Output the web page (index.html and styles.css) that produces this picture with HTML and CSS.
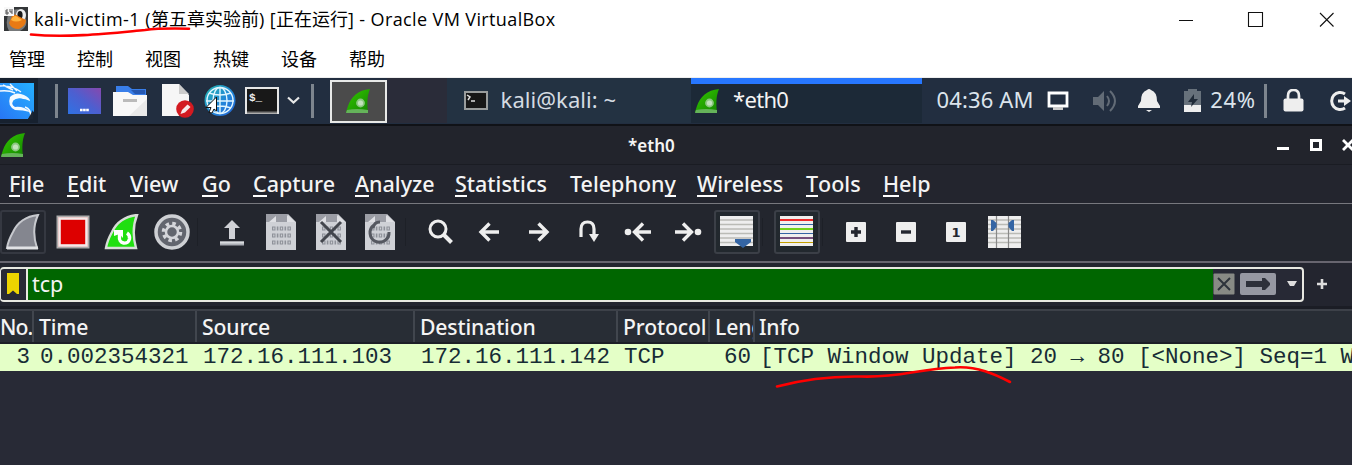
FILE: index.html
```html
<!DOCTYPE html>
<html lang="zh-CN">
<head>
<meta charset="utf-8">
<title>kali-victim-1</title>
<link rel="stylesheet" href="styles.css">
</head>
<body>
<svg class="defs" width="0" height="0">
  <defs>
    <linearGradient id="finfill" x1="0" y1="0" x2="1" y2="1"><stop offset="0" stop-color="#35c900"/><stop offset="1" stop-color="#128500"/></linearGradient>
    <linearGradient id="desk" x1="0" y1="1" x2="1" y2="0"><stop offset="0" stop-color="#2f72e4"/><stop offset=".5" stop-color="#4d5fd0"/><stop offset="1" stop-color="#8648ae"/></linearGradient>
    <linearGradient id="sky" x1="0" y1="1" x2="1" y2="0"><stop offset="0" stop-color="#2876f5"/><stop offset="1" stop-color="#25b1ff"/></linearGradient>
    <linearGradient id="world" x1="0" y1="0" x2="1" y2="1"><stop offset="0" stop-color="#23b5ad"/><stop offset=".6" stop-color="#2184db"/><stop offset="1" stop-color="#2461cf"/></linearGradient>
  </defs>
  <symbol id="fin" viewBox="0 0 24 24">
    <path d="M24 0C12 1 5 8 2 17L0 23H22C21 15 21 7 24 0Z" fill="url(#finfill)"/>
    <path d="M1 21Q11 19 22 21V24H0Z" fill="#65b35a"/>
    <circle cx="14.5" cy="14" r="4.4" fill="#8bc780"/><circle cx="14.5" cy="14" r="2.6" fill="#c2e2bc"/>
  </symbol>
  <symbol id="doc" viewBox="0 0 30 36">
    <path d="M0 0H22L30 8V36H0Z" fill="#cfd1d6"/><path d="M0 0H22V8H0Z" fill="#9b9da5"/>
    <path d="M3 8L10 2V8ZM21 1L29 8H21Z" fill="#dfe0e4"/>
    <g fill="none" stroke="#8e9199" stroke-width="4"><path d="M6 14.500H25M6 21.500H25M6 28.500H25" stroke-dasharray="3.500 1.300 1.600 1.300"/></g>
    <g fill="none" stroke="#cfd1d6" stroke-width="1.800"><path d="M7.200 14.500H24M7.200 21.500H24M7.200 28.500H24" stroke-dasharray="1.200 6.500"/></g>
  </symbol>
</svg>

<header class="host-title">
  <svg class="vm-icon" viewBox="0 0 24 24">
    <rect width="24" height="24" fill="#333638"/><path d="M6 4Q20-2 22 12Q24 20 16 24H5Q0 15 6 4Z" fill="#77797a"/>
    <ellipse cx="17" cy="8" rx="5" ry="6" fill="#eceded"/><ellipse cx="16" cy="8" rx="2.6" ry="4" fill="#17191a"/>
    <path d="M5 16L8 9Q11 6 14 9L22 13Q22 19 15 22Q7 22 5 16Z" fill="#e87a14"/><path d="M8 11Q11 7 15 11L18 13Q12 16 7 13Z" fill="#ffb33c"/>
    <rect width="10" height="9" fill="#f8f8f8"/><path d="M4 3H2V7H4V5H2M6 2V5H8M8 2V7" fill="none" stroke="#444" stroke-width=".9"/>
  </svg>
  <div class="host-name"><span class="t1">kali-victim-1 (</span><span class="t2">第五章实验前</span><span class="t3">) [</span><span class="t2">正在运行</span><span class="t4">] - Oracle VM VirtualBox</span></div>
  <svg class="host-controls" viewBox="0 0 166 38"><path d="M9 20.500H23M78.500 12.500H92.500V26.500H78.500ZM150 13L163.500 26.500M163.500 13L150 26.500" fill="none" stroke="#111" stroke-width="1.1"/></svg>
</header>
<nav class="host-menu"><span>管理</span><span>控制</span><span>视图</span><span>热键</span><span>设备</span><span>帮助</span></nav>

<section class="panel">
  <div class="kali-logo"><svg width="34" height="36" viewBox="0 0 34 36"><path d="M0 0H34V28L28 36H0Z" fill="url(#sky)"/><path d="M0 3Q12 2 21 9M0 8Q9 7 15 10M3 2L13 7M10 1L17 8" fill="none" stroke="#f4faff" stroke-width="1.400"/><path d="M10 14Q16 8 24 12Q30 15 30 18Q22 14 14 17Q10 21 15 24Q24 23 30 29Q23 27 15 27Q7 23 10 14Z" fill="#f4faff"/><path d="M13 18Q17 14 23 16Q15 17 14 21Z" fill="#279cff"/><path d="M25 24Q31 26 31 34" fill="none" stroke="#f4faff" stroke-width="1.800"/><path d="M33 27V36H28Z" fill="#1b2533"/></svg></div>
  <i class="divider d1"></i>
  <svg class="p-desktop" viewBox="0 0 33 26"><rect width="33" height="26" fill="url(#desk)"/><path d="M12 22H21" stroke="#fff" stroke-width="2.500" stroke-dasharray="2.600 .5"/></svg>
  <svg class="p-folder" viewBox="0 0 34 31"><path d="M3 10V1H15L19 4H33V10Z" fill="#397ee9"/><path d="M18 5H32V9H22Z" fill="#2558b2"/><path d="M0 7H15L20 10H34V31H0Z" fill="#f8f8f8"/><path d="M16 31L34 14V31Z" fill="#e9e9e9"/><path d="M10 15.500H24" stroke="#bbb" stroke-width="3"/></svg>
  <svg class="p-editor" viewBox="0 0 32 34"><path d="M0 0H17L27 11V32H0Z" fill="#f6f6f6"/><path d="M17 0V10H27Z" fill="#ccc"/><circle cx="23" cy="25" r="8.800" fill="#d31a20"/><path d="M18.500 30L20 26L25.500 20.500L28.500 23L23 28.500Z" fill="#f8eaea"/></svg>
  <svg class="p-globe" viewBox="0 0 33 34"><circle cx="17" cy="16.500" r="15.500" fill="url(#world)"/><g fill="none" stroke="#dff5ff" stroke-width="1.400"><circle cx="17" cy="16.500" r="13"/><ellipse cx="17" cy="16.500" rx="7" ry="13"/><path d="M17 3V30M3 17H31M6 9Q17 13 28 9M6 24Q17 20 28 24"/></g><path d="M13.500 13L3 23.500H8L6 28.500L9 29L11 25L13.500 27Z" fill="#fff" stroke="#111" stroke-width="1"/></svg>
  <svg class="p-term" viewBox="0 0 34 28"><rect x="1" y="1" width="32" height="25" fill="#181818" stroke="#e6e6e6" stroke-width="2"/><path d="M2 25.500H32" stroke="#777" stroke-width="2"/><text x="4" y="14" class="prompt">$_</text></svg>
  <svg class="p-chevron" viewBox="0 0 13 9"><path d="M1 1.500L6.500 6.500L12 1.500" fill="none" stroke="#e8e8e8" stroke-width="2.200"/></svg>
  <i class="divider d2"></i>
  <div class="tray-active"><svg width="24" height="24"><use href="#fin"/></svg></div>
  <div class="task-gap"></div>
  <div class="task kali"><svg width="24" height="19" viewBox="0 0 24 19"><rect x="1" y="1" width="22" height="17" fill="#171717" stroke="#999c9c" stroke-width="2"/><path d="M3 4L6 6L4 9M7 10H11" stroke="#ddd" stroke-width="1.500" fill="none"/></svg><span class="task-kali">kali@kali: ~</span></div>
  <div class="task wireshark"><svg width="24" height="24"><use href="#fin"/></svg><span class="task-eth">*eth0</span></div>
  <span class="clock">04:36 AM</span>
  <svg class="s-screen" viewBox="0 0 22 21"><path d="M2 3H20V16H2Z" fill="none" stroke="#fff" stroke-width="2.800"/><path d="M6 17H16V20H6Z" fill="#ccc"/></svg>
  <svg class="s-sound" viewBox="0 0 24 22"><path d="M0 7H5L11 1V21L5 15H0Z" fill="#626b76"/><path d="M14 6Q18 11 14 16M17 1Q27 11 17 21" fill="none" stroke="#626b76" stroke-width="2"/></svg>
  <svg class="s-bell" viewBox="0 0 22 23"><path d="M9 1Q11-1 13 1Q19 3 19 12L22 17V19H0V17L3 12Q3 3 9 1ZM8 21H14L11 23Z" fill="#eee"/></svg>
  <svg class="s-battery" viewBox="0 0 17 23"><path d="M4 0H13V2H17V16H0V2H4Z" fill="#67717b"/><path d="M0 16H17V23H0Z" fill="#eee"/><path d="M10 5L4 13H8L7 18L14 10H10Z" fill="#202b38"/></svg>
  <span class="charge">24%</span>
  <i class="divider d3"></i>
  <svg class="s-lock" viewBox="0 0 21 23"><path d="M5 12V7Q5 1 10.500 1T16 7V12" fill="none" stroke="#eee" stroke-width="2.700"/><rect x=".5" y="9.500" width="20" height="13" rx="2" fill="#eee"/></svg>
  <svg class="s-exit" viewBox="0 0 24 22"><path d="M17 4A8.500 8.500 0 1 0 17 18" fill="none" stroke="#eee" stroke-width="3"/><path d="M10 11H20" stroke="#eee" stroke-width="3"/><path d="M16 6L23 11L16 16Z" fill="#eee"/></svg>
</section>

<section class="window-title">
  <svg width="24" height="24"><use href="#fin"/></svg><strong>*eth0</strong>
  <svg class="win-controls" viewBox="0 0 75 14"><path d="M0 10.500H12" stroke="#fff" stroke-width="3"/><rect x="34.500" y="2.500" width="9" height="9" fill="none" stroke="#fff" stroke-width="3"/><path d="M66 2L76 12M76 2L66 12" stroke="#fff" stroke-width="2.800"/></svg>
</section>
<nav class="menu">
  <span class="m-file"><u>F</u>ile</span><span class="m-edit"><u>E</u>dit</span><span class="m-view"><u>V</u>iew</span><span class="m-go"><u>G</u>o</span><span class="m-cap"><u>C</u>apture</span><span class="m-ana"><u>A</u>nalyze</span><span class="m-stat"><u>S</u>tatistics</span><span class="m-tel">Telephon<u>y</u></span><span class="m-wire"><u>W</u>ireless</span><span class="m-tools"><u>T</u>ools</span><span class="m-help"><u>H</u>elp</span>
</nav>
<section class="toolbar">
  <div class="tool"><b class="dim"><svg viewBox="0 0 36 36"><path d="M33 1Q15 3 8 18Q3 27 2 34H32Q26 16 33 1Z" fill="#84868f" stroke="#c7c9ce" stroke-width="2"/><path d="M2 34H33" stroke="#e1e2e5" stroke-width="3"/></svg></b></div>
  <div class="tool"><svg viewBox="0 0 36 36"><rect x="2.500" y="2.500" width="31" height="31" fill="#d00" stroke="#aaa" stroke-width="2"/><rect x="4.500" y="4.500" width="27" height="27" fill="none" stroke="#f4eaea" stroke-width="2.600"/></svg></div>
  <div class="tool"><svg viewBox="0 0 36 36"><path d="M33 1Q15 3 8 18Q3 27 2 34H32Q27 16 33 1Z" fill="#20df10" stroke="#d8ddd8" stroke-width="2.400"/><path d="M10 16H19V24L15.500 20L10 22Z" fill="#fff"/><path d="M15.500 20V23A5 5 0 0 0 25.500 25Q26 21 23 19" fill="none" stroke="#fff" stroke-width="3.400"/></svg></div>
  <div class="tool"><svg viewBox="0 0 36 36"><circle cx="18" cy="18" r="16" fill="#62656e" stroke="#ced0d4" stroke-width="3.500"/><circle cx="18" cy="18" r="8.500" fill="none" stroke="#d4d5da" stroke-width="3.500" stroke-dasharray="3.500 3.175"/><circle cx="18" cy="18" r="6" fill="#62656e" stroke="#d4d5da" stroke-width="2.500"/></svg></div>
  <i></i>
  <div class="tool"><svg viewBox="0 0 36 36"><path d="M18 6L26 14H21V25H15V14H10Z" fill="#cfd1d6"/><path d="M6 29.500H30" stroke="#aaadb4" stroke-width="4"/><path d="M6 28.500H30" stroke="#d9dbdf" stroke-width="2"/></svg></div>
  <div class="tool"><svg class="document"><use href="#doc"/></svg></div>
  <div class="tool"><svg viewBox="0 0 36 36"><use href="#doc" x="3" width="30" height="36"/><path d="M8 8L28 28M28 8L8 28" stroke="#43464d" stroke-width="3"/></svg></div>
  <div class="tool"><svg viewBox="0 0 36 36"><use href="#doc" x="3" width="30" height="36"/><path d="M12 11A9.500 9.500 0 1 0 27 18M18 8Q12 8 11 14" fill="none" stroke="#555860" stroke-width="3"/></svg></div>
  <i></i>
  <div class="tool"><svg viewBox="0 0 36 36"><circle cx="16" cy="15" r="8" fill="none" stroke="#eee" stroke-width="3"/><path d="M21.500 20.500L29.500 28.500" stroke="#eee" stroke-width="4"/></svg></div>
  <div class="tool"><svg viewBox="0 0 36 36"><path d="M28 18H11M18.500 9.500L10 18L18.500 26.500" fill="none" stroke="#eee" stroke-width="3.400"/></svg></div>
  <div class="tool"><svg viewBox="0 0 36 36"><path d="M8 18H25M17.500 9.500L26 18L17.500 26.500" fill="none" stroke="#eee" stroke-width="3.400"/></svg></div>
  <div class="tool"><svg viewBox="0 0 36 36"><path d="M10 23V15Q10 8 16.500 8T23 15V23" fill="none" stroke="#eee" stroke-width="3.200"/><path d="M18 20H28L23 28Z" fill="#eee"/></svg></div>
  <div class="tool"><svg viewBox="0 0 36 36"><circle cx="8" cy="18" r="3.300" fill="#eee"/><path d="M31 18H16M23 9.500L14.500 18L23 26.500" fill="none" stroke="#eee" stroke-width="3.400"/></svg></div>
  <div class="tool"><svg viewBox="0 0 36 36"><circle cx="28" cy="18" r="3.300" fill="#eee"/><path d="M5 18H20M13 9.500L21.500 18L13 26.500" fill="none" stroke="#eee" stroke-width="3.400"/></svg></div>
  <div class="tool"><b><svg viewBox="0 0 36 36"><rect x="1" y="2" width="33" height="30" fill="#eee"/><path d="M1 6H34M1 10.500H34M1 15H34M1 19.500H34M1 24H34M1 28.500H34" stroke="#babbb6" stroke-width="1.500"/><path d="M16 25H32V28L24 34L16 28Z" fill="#3465a4"/></svg></b></div>
  <i></i>
  <div class="tool"><b><svg viewBox="0 0 36 36"><rect x="1" y="2" width="33" height="30" fill="#f0f0ee"/><path d="M1 6H34" stroke="#ef2929" stroke-width="2"/><path d="M1 10.500H34M1 19.500H34" stroke="#3465a4"/><path d="M1 15H34" stroke="#73d216" stroke-width="2"/><path d="M1 24H34" stroke="#75507b" stroke-width="2"/><path d="M1 28.500H34" stroke="#c4a000"/></svg></b></div>
  <i></i>
  <div class="tool"><svg viewBox="0 0 36 36"><rect x="8" y="8" width="20" height="20" rx="1" fill="#eee"/><path d="M13 18H23M18 13V23" stroke="#23262f" stroke-width="3.400"/></svg></div>
  <div class="tool"><svg viewBox="0 0 36 36"><rect x="8" y="8" width="20" height="20" rx="1" fill="#eee"/><path d="M13 18H23" stroke="#23262f" stroke-width="3.400"/></svg></div>
  <div class="tool"><svg viewBox="0 0 36 36"><rect x="8" y="8" width="20" height="20" rx="1" fill="#eee"/><text x="13.500" y="22.800" class="one">1</text></svg></div>
  <div class="tool"><svg viewBox="0 0 36 36"><rect x="1" y="2" width="33" height="32" fill="#eee"/><path d="M1 6H34M1 10.500H34M1 15H34M1 19.500H34M1 24H34M1 28.500H34" stroke="#babbb6" stroke-width="1.500"/><path d="M9.500 2V34M21.500 2V34" stroke="#888" stroke-width="1.200"/><path d="M4 6H6L9.500 9V13L6 17H4ZM27 6H25L21.500 9V13L25 17H27Z" fill="#3465a4"/></svg></div>
</section>
<section class="filter-bar">
  <div class="filter">
    <div class="bookmark"><svg width="14" height="22" viewBox="0 0 14 22"><path d="M1 0H13V21H11L7 17.500L3 21H1Z" fill="#edd400"/></svg></div>
    <div class="filter-text">tcp</div>
    <svg class="clear" viewBox="0 0 22 22"><rect x=".5" y=".5" width="21" height="21" rx="1" fill="#888a85"/><path d="M5 5L17 17M17 5L5 17" stroke="#2d333b" stroke-width="2"/></svg>
    <svg class="apply" viewBox="0 0 36 22"><rect width="36" height="22" rx="2" fill="#9698a2"/><path d="M6 8H22V5H25L30 10V12L25 17H22V14H6Z" fill="#2d303a"/></svg>
    <svg class="drop" viewBox="0 0 10 6"><path d="M0 0H10L7 5H3Z" fill="#ddd"/></svg>
  </div>
  <svg class="add" viewBox="0 0 12 12"><path d="M1 6H11M6 1V11" stroke="#ddd" stroke-width="2.600"/></svg>
</section>
<section class="packets">
  <div class="columns heading"><span class="no">No.</span><span>Time</span><span>Source</span><span>Destination</span><span>Protocol</span><span class="len">Length</span><span>Info</span></div>
  <div class="columns packet"><span>3</span><span>0.002354321</span><span>172.16.111.103</span><span>172.16.111.142</span><span>TCP</span><span class="right">60</span><span>[TCP Window Update] 20 → 80 [&lt;None&gt;] Seq=1 W</span></div>
</section>
<svg class="marks" viewBox="0 0 1352 465"><path d="M31 34.500C70 38 112 33 145 30Q160 28 189 28.700" /><path d="M777 386.500C805 379 835 376 861 376.500C899 378 917 369 955 367.500C977 366 995 374 1010 382"/></svg>
</body>
</html>
```
FILE: styles.css
```css
* { box-sizing: border-box; }
body { margin: 0; width: 1352px; height: 465px; overflow: hidden; background: #282a36; font-family: "Noto Sans", sans-serif; color: #f4f4f4; white-space: nowrap; }
svg { display: block; flex: none; }
.defs { position: absolute; }
.host-title { height: 38px; background: #fff; display: flex; align-items: center; color: #000; padding-left: 4px; }
.vm-icon { width: 24px; height: 24px; }
.host-name { display: flex; align-items: center; margin-left: 6px; font: 18px/38px "Open Sans", "Noto Sans CJK SC", sans-serif; white-space: pre; }
.host-name .t1 { letter-spacing: .45px; }
.host-name .t3 { letter-spacing: .4px; }
.host-name .t4 { letter-spacing: .38px; }
.host-name .t2 { font-family: "Noto Sans CJK SC", sans-serif; height: 40px; }
.host-controls { width: 166px; height: 38px; margin-left: auto; margin-right: 16px; }
.host-menu { height: 40px; border-bottom: 1px solid #eee; background: #fff; display: flex; padding-left: 9px; font: 18px/41px "Noto Sans CJK SC", sans-serif; color: #000; }
.host-menu span { width: 68px; }

.panel { height: 48px; border-bottom: 2px solid #101217; background: #222e40; display: flex; align-items: center; padding-bottom: 1px; }
.kali-logo { width: 38px; height: 45px; background: #17212f; padding-top: 5px; }
.divider { width: 3px; height: 34px; background: #7d858e; flex: none; }
.d1 { margin-left: 17px; }
.p-desktop { width: 33px; height: 26px; margin-left: 10px; }
.p-folder { width: 34px; height: 31px; margin-left: 12px; }
.p-editor { width: 32px; height: 34px; margin-left: 15px; }
.p-globe { width: 33px; height: 34px; margin-left: 9px; }
.p-term { width: 34px; height: 28px; margin-left: 9px; }
.prompt { font: bold 11px "Liberation Mono", monospace; fill: #eee; }
.p-chevron { width: 13px; height: 9px; margin-left: 8px; }
.d2 { margin-left: 11px; }
.tray-active { width: 57px; height: 43px; margin: 1px 0 0 16px; background: #4b4b4b; border: 2px solid #e8e9e7; display: flex; align-items: center; justify-content: center; }
.task-gap { width: 60px; height: 45px; background: #2a2c39; }
.task { height: 45px; display: flex; align-items: center; font-size: 22px; line-height: 40px; }
.task span, .clock, .charge { height: 44px; line-height: 41px; }
.kali { width: 245px; background: #233242; padding-left: 17px; }
.task-kali { margin-left: 13px; color: #d5dce2; letter-spacing: .05px; }
.wireshark { width: 232px; background: #1c2937; border-top: 6px solid #2777ff; padding: 0 0 6px 4px; }
.task-eth { margin-left: 14px; letter-spacing: -.7px; }
.clock { width: 111px; margin-left: 14px; font-size: 22px; letter-spacing: .15px; color: #dce4ec; }
.s-screen { width: 22px; height: 21px; }
.s-sound { width: 24px; height: 22px; margin-left: 24px; }
.s-bell { width: 22px; height: 23px; margin-left: 21px; }
.s-battery { width: 17px; height: 23px; margin-left: 24px; }
.charge { width: 54px; margin-left: 9px; font-size: 22px; letter-spacing: .7px; color: #dce4ec; }
.s-lock { width: 21px; height: 23px; margin-left: 16px; }
.s-exit { width: 24px; height: 22px; margin-left: 24px; }

.window-title { height: 39px; background: #22242c; border-bottom: 1px solid #1a1c23; display: flex; align-items: center; padding-left: 1px; }
.window-title strong { margin-left: 603px; font-size: 17px; font-weight: 600; }
.win-controls { width: 75px; height: 14px; margin-left: auto; }
.menu { height: 39px; background: #23252e; border-bottom: 1px solid #77787e; display: flex; padding-left: 9px; font-size: 21.5px; font-weight: 500; line-height: 37px; }
.menu u { text-decoration: none; display: inline-block; height: 32px; line-height: 37px; border-bottom: 2px solid #fff; vertical-align: top; }
.m-file { width: 58px; } .m-edit { width: 63px; } .m-view { width: 72px; } .m-go { width: 51px; }
.m-cap { width: 102px; } .m-ana { width: 100px; } .m-stat { width: 115px; } .m-tel { width: 127px; }
.m-wire { width: 109px; } .m-tools { width: 77px; }
.toolbar { height: 59px; background: #23262e; border-bottom: 2px solid #67656f; display: flex; align-items: center; padding-bottom: 2px; }
.tool { width: 49.6px; display: flex; justify-content: center; flex: none; }
.tool:first-child { margin-left: -1.5px; }
.tool svg { width: 36px; height: 36px; }
.tool .document { width: 30px; }
.toolbar > i { width: 9.9px; height: 28px; border-left: 1px solid #1d2027; flex: none; }
.tool b { width: 46px; height: 44px; border: 2px solid #3b3f47; border-radius: 3px; display: flex; align-items: center; justify-content: center; background: #22282e; }
.tool b.dim { background: #23262e; border-color: #353841; }
.one { font: bold 13px "DejaVu Sans", sans-serif; fill: #23262f; }
.filter-bar { height: 46px; display: flex; background: #23252f; padding-top: 4px; border-bottom: 3px solid #1b1d25; }
.filter { width: 1304px; height: 35px; border: 2px solid #e8e8e1; border-left-width: 1px; border-radius: 4px; display: flex; align-items: center; background: #272935; }
.bookmark { width: 27px; height: 31px; border-right: 2px solid #e8e8e1; padding: 4px 0 0 5px; }
.filter-text { width: 1185px; height: 31px; background: #060; font-size: 21.5px; line-height: 30px; padding-left: 4px; }
.clear { width: 22px; height: 22px; margin-bottom: 2px; }
.apply { width: 36px; height: 22px; margin: 0 0 2px 5px; }
.drop { width: 10px; height: 6px; margin: 0 0 2px 11px; }
.add { width: 12px; height: 12px; margin: 11px 0 0 12px; }
.columns { display: grid; grid-template-columns: 34px 163px 218px 203px 92px 45px 597px; }
.columns span { overflow: hidden; }
.heading { height: 35px; background: #282d35; border-top: 2px solid #3d4149; border-bottom: 2px solid #1c1f27; font-size: 21.2px; font-weight: 500; line-height: 31px; letter-spacing: -.15px; }
.heading span { border-right: 2px solid #41464e; padding-left: 5px; }
.heading span:last-child { border-right: 0; padding-left: 4px; }
.heading .no { padding-left: 0; letter-spacing: -.9px; }
.packet { height: 27px; background: #e4ffc7; color: #172c35; font: 22.5px/26px "Liberation Mono", monospace; }
.packet span { padding-left: 6px; }
.packet span:first-child, .packet .right { text-align: right; padding: 0 4px 0 0; }
.packet span:last-child { padding-left: 5px; }
.marks { position: absolute; left: 0; top: 0; width: 1352px; height: 465px; pointer-events: none; fill: none; stroke: #f00; stroke-width: 2.6; stroke-linecap: round; }
```
